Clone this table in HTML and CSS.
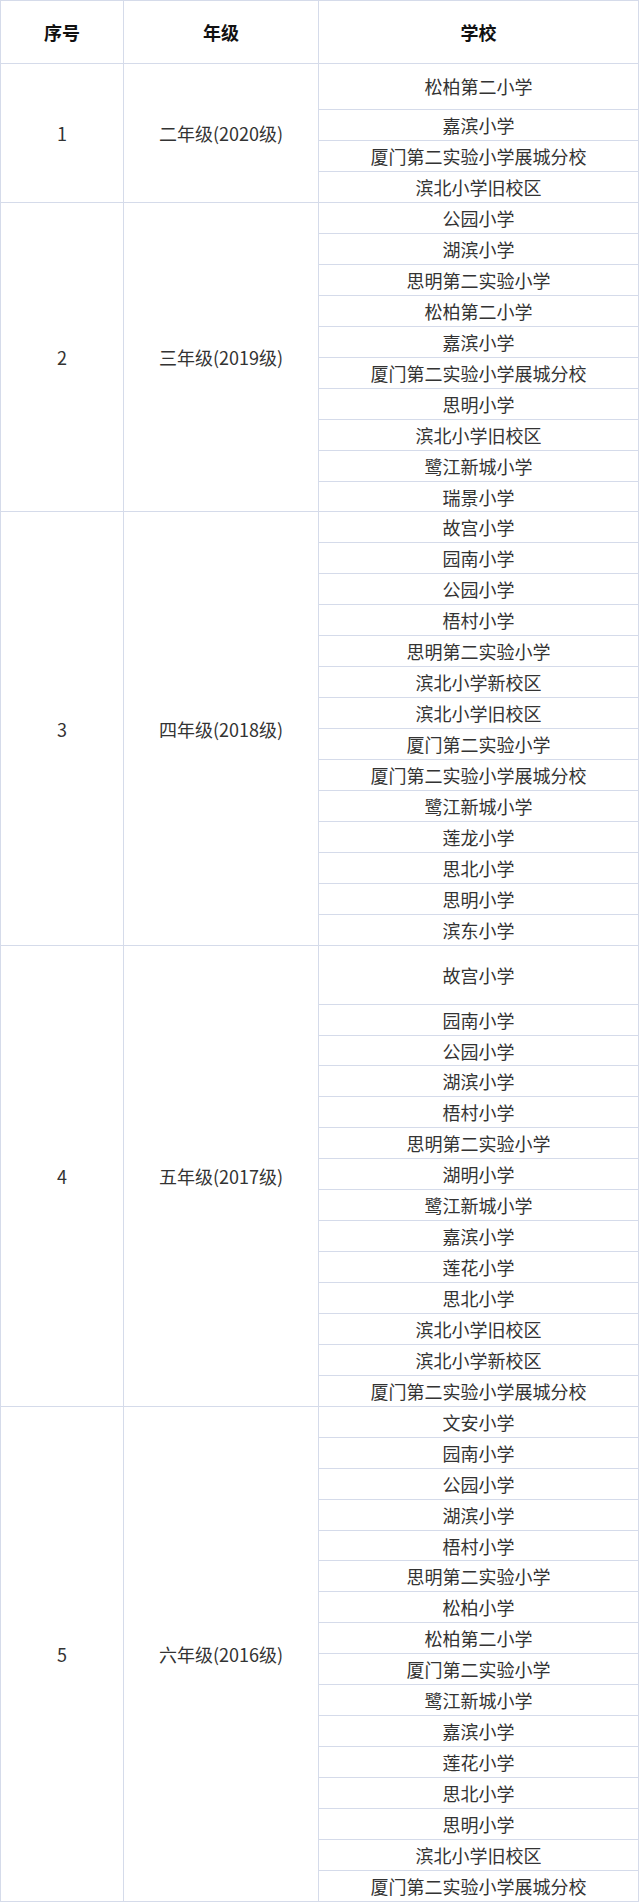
FILE: index.html
```html
<!DOCTYPE html>
<html lang="zh-CN">
<head>
<meta charset="utf-8">
<title>学校列表</title>
<link rel="stylesheet" href="styles.css">
</head>
<body>
<div class="table">
  <div class="c hd">序号</div>
  <div class="c hd">年级</div>
  <div class="c hd">学校</div>

  <div class="c num g4">1</div>
  <div class="c grade g4">二年级(2020级)</div>
  <div class="c s t1">松柏第二小学</div>
  <div class="c s">嘉滨小学</div>
  <div class="c s">厦门第二实验小学展城分校</div>
  <div class="c s">滨北小学旧校区</div>

  <div class="c num g10">2</div>
  <div class="c grade g10">三年级(2019级)</div>
  <div class="c s">公园小学</div>
  <div class="c s">湖滨小学</div>
  <div class="c s">思明第二实验小学</div>
  <div class="c s">松柏第二小学</div>
  <div class="c s">嘉滨小学</div>
  <div class="c s">厦门第二实验小学展城分校</div>
  <div class="c s">思明小学</div>
  <div class="c s">滨北小学旧校区</div>
  <div class="c s">鹭江新城小学</div>
  <div class="c s">瑞景小学</div>

  <div class="c num g14">3</div>
  <div class="c grade g14">四年级(2018级)</div>
  <div class="c s">故宫小学</div>
  <div class="c s">园南小学</div>
  <div class="c s">公园小学</div>
  <div class="c s">梧村小学</div>
  <div class="c s">思明第二实验小学</div>
  <div class="c s">滨北小学新校区</div>
  <div class="c s">滨北小学旧校区</div>
  <div class="c s">厦门第二实验小学</div>
  <div class="c s">厦门第二实验小学展城分校</div>
  <div class="c s">鹭江新城小学</div>
  <div class="c s">莲龙小学</div>
  <div class="c s">思北小学</div>
  <div class="c s">思明小学</div>
  <div class="c s">滨东小学</div>

  <div class="c num g14">4</div>
  <div class="c grade g14">五年级(2017级)</div>
  <div class="c s t2">故宫小学</div>
  <div class="c s">园南小学</div>
  <div class="c s">公园小学</div>
  <div class="c s">湖滨小学</div>
  <div class="c s">梧村小学</div>
  <div class="c s">思明第二实验小学</div>
  <div class="c s">湖明小学</div>
  <div class="c s">鹭江新城小学</div>
  <div class="c s">嘉滨小学</div>
  <div class="c s">莲花小学</div>
  <div class="c s">思北小学</div>
  <div class="c s">滨北小学旧校区</div>
  <div class="c s">滨北小学新校区</div>
  <div class="c s">厦门第二实验小学展城分校</div>

  <div class="c num g16">5</div>
  <div class="c grade g16">六年级(2016级)</div>
  <div class="c s">文安小学</div>
  <div class="c s">园南小学</div>
  <div class="c s">公园小学</div>
  <div class="c s">湖滨小学</div>
  <div class="c s">梧村小学</div>
  <div class="c s">思明第二实验小学</div>
  <div class="c s">松柏小学</div>
  <div class="c s">松柏第二小学</div>
  <div class="c s">厦门第二实验小学</div>
  <div class="c s">鹭江新城小学</div>
  <div class="c s">嘉滨小学</div>
  <div class="c s">莲花小学</div>
  <div class="c s">思北小学</div>
  <div class="c s">思明小学</div>
  <div class="c s">滨北小学旧校区</div>
  <div class="c s">厦门第二实验小学展城分校</div>
</div>
</body>
</html>
```

FILE: styles.css
```css
html, body {
  margin: 0;
  padding: 0;
  background: #ffffff;
}

body {
  font-family: "Noto Sans CJK SC", "Noto Sans", sans-serif;
  font-size: 18px;
  color: #333333;
}

.table {
  box-sizing: border-box;
  width: 639px;
  display: grid;
  grid-template-columns: 122px 194px 319px;
  gap: 1px;
  padding: 1px;
  background: #d5dbea;
}

.c {
  background: #ffffff;
  display: flex;
  align-items: center;
  justify-content: center;
  line-height: 1;
  white-space: nowrap;
}

.hd {
  height: 61.7px;
  font-weight: bold;
  color: #111111;
}

.num { grid-column: 1; }
.grade { grid-column: 2; }
.s { grid-column: 3; height: 29.94px; }
.s.t1 { height: 45.6px; }
.s.t2 { height: 58px; }

.g4 { grid-row: span 4; }
.g10 { grid-row: span 10; }
.g14 { grid-row: span 14; }
.g16 { grid-row: span 16; }
```
